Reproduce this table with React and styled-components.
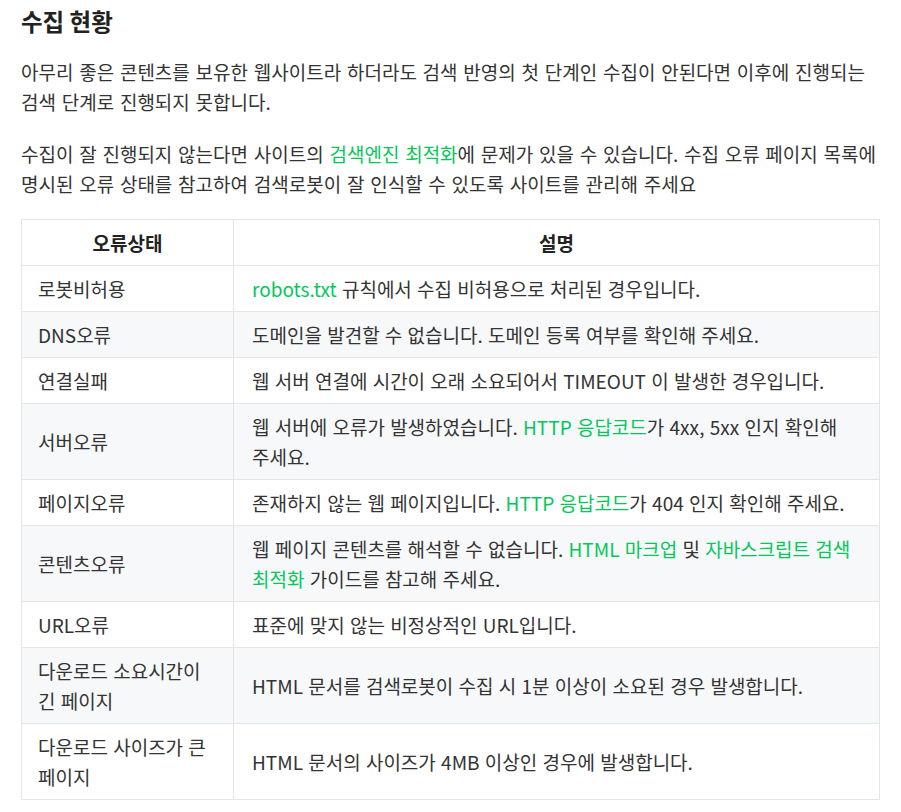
import React from "react";
import styled, { createGlobalStyle } from "styled-components";

const GlobalStyle = createGlobalStyle`
  body {
    margin: 0;
    background: #fff;
    font-family: "Noto Sans CJK KR", "Noto Sans", sans-serif;
    color: #333;
    word-break: keep-all;
  }
`;

const Page = styled.div`
  padding: 4px 21px 0;
`;

const Title = styled.h2`
  margin: 0 0 19px;
  font-size: 23.5px;
  line-height: 34px;
  font-weight: 700;
  color: #222;
`;

const Paragraph = styled.p`
  margin: 0 0 ${props => props.gap || 22}px;
  font-size: 19px;
  line-height: 30px;
  word-spacing: 1.5px;
`;

const Link = styled.a`
  color: #03c75a;
  text-decoration: none;
`;

const Table = styled.table`
  width: 100%;
  table-layout: fixed;
  border-collapse: collapse;
  font-size: 19px;
  line-height: 30px;
  word-spacing: 1px;
`;

const HeadCell = styled.th`
  border: 1px solid #e4e5e7;
  padding: 7.5px 16px;
  text-align: center;
  font-weight: 700;
  color: #222;
  width: ${props => props.width || "auto"};
`;

const Row = styled.tr`
  &:nth-child(even) {
    background: #f7f8fa;
  }
`;

const Cell = styled.td`
  border: 1px solid #e4e5e7;
  padding: 7.5px 16px 7.5px ${props => props.first ? 16 : 18}px;
  text-align: left;
  vertical-align: middle;
`;

const rows = [
  ["로봇비허용", <><Link>robots.txt</Link> 규칙에서 수집 비허용으로 처리된 경우입니다.</>],
  ["DNS오류", "도메인을 발견할 수 없습니다. 도메인 등록 여부를 확인해 주세요."],
  ["연결실패", "웹 서버 연결에 시간이 오래 소요되어서 TIMEOUT 이 발생한 경우입니다."],
  ["서버오류", <>웹 서버에 오류가 발생하였습니다. <Link>HTTP 응답코드</Link>가 4xx, 5xx 인지 확인해 주세요.</>],
  ["페이지오류", <>존재하지 않는 웹 페이지입니다. <Link>HTTP 응답코드</Link>가 404 인지 확인해 주세요.</>],
  ["콘텐츠오류", <>웹 페이지 콘텐츠를 해석할 수 없습니다. <Link>HTML 마크업</Link> 및 <Link>자바스크립트 검색 최적화</Link> 가이드를 참고해 주세요.</>],
  ["URL오류", "표준에 맞지 않는 비정상적인 URL입니다."],
  ["다운로드 소요시간이 긴 페이지", "HTML 문서를 검색로봇이 수집 시 1분 이상이 소요된 경우 발생합니다."],
  ["다운로드 사이즈가 큰 페이지", "HTML 문서의 사이즈가 4MB 이상인 경우에 발생합니다."],
];

export default function App() {
  return (
    <Page>
      <GlobalStyle />
      <Title>수집 현황</Title>
      <Paragraph>
        아무리 좋은 콘텐츠를 보유한 웹사이트라 하더라도 검색 반영의 첫 단계인 수집이 안된다면 이후에 진행되는 검색 단계로 진행되지 못합니다.
      </Paragraph>
      <Paragraph gap={20}>
        수집이 잘 진행되지 않는다면 사이트의 <Link>검색엔진 최적화</Link>에 문제가 있을 수 있습니다. 수집 오류 페이지 목록에 명시된 오류 상태를 참고하여 검색로봇이 잘 인식할 수 있도록 사이트를 관리해 주세요
      </Paragraph>
      <Table>
        <thead>
          <tr>
            <HeadCell width="179px">오류상태</HeadCell>
            <HeadCell>설명</HeadCell>
          </tr>
        </thead>
        <tbody>
          {rows.map(([status, desc]) => (
            <Row key={status}>
              <Cell first>{status}</Cell>
              <Cell>{desc}</Cell>
            </Row>
          ))}
        </tbody>
      </Table>
    </Page>
  );
}
